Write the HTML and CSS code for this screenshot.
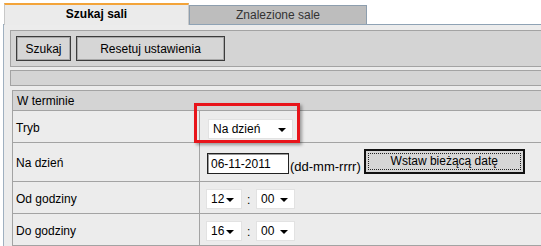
FILE: index.html
```html
<!DOCTYPE html>
<html>
<head>
<meta charset="utf-8">
<link rel="stylesheet" href="styles.css">
</head>
<body>
<div class="page">
  <div class="tabs">
    <div class="tab tab-active">Szukaj sali</div>
    <div class="tab tab-inactive">Znalezione sale</div>
  </div>
  <div class="panel">
    <div class="toolbar">
      <button class="btn btn-szukaj">Szukaj</button>
      <button class="btn btn-reset">Resetuj ustawienia</button>
    </div>
    <div class="strip"></div>
    <div class="form">
      <div class="row row-head"><div class="cell-full">W terminie</div></div>
      <div class="row row-tryb">
        <div class="label">Tryb</div>
        <div class="value">
          <div class="select select-tryb"><span>Na dzień</span><i class="arrow"></i></div>
        </div>
      </div>
      <div class="row row-date">
        <div class="label">Na dzień</div>
        <div class="value value-date">
          <div class="input-date">06-11-2011</div>
          <span class="hint">(dd-mm-rrrr)</span>
          <div class="btn-now"><span class="focus">Wstaw bieżącą datę</span></div>
        </div>
      </div>
      <div class="row row-time">
        <div class="label">Od godziny</div>
        <div class="value value-time">
          <div class="select select-h"><span>12</span><i class="arrow"></i></div>
          <span class="colon">:</span>
          <div class="select select-m"><span>00</span><i class="arrow"></i></div>
        </div>
      </div>
      <div class="row row-time">
        <div class="label">Do godziny</div>
        <div class="value value-time">
          <div class="select select-h"><span>16</span><i class="arrow"></i></div>
          <span class="colon">:</span>
          <div class="select select-m"><span>00</span><i class="arrow"></i></div>
        </div>
      </div>
    </div>
    <div class="highlight"></div>
  </div>
</div>
</body>
</html>
```

FILE: styles.css
```css
html, body {
  margin: 0;
  padding: 0;
  background: #ffffff;
  overflow: hidden;
}
body {
  width: 541px;
  height: 246px;
  font-family: "Liberation Sans", Arial, sans-serif;
  font-size: 12px;
  color: #000;
}
.page {
  width: 541px;
}
.tabs {
  display: flex;
  align-items: flex-end;
  padding-left: 4px;
  height: 24px;
  box-sizing: border-box;
  padding-top: 3px;
}
.tab {
  box-sizing: border-box;
  display: flex;
  align-items: center;
  justify-content: center;
}
.tab-active {
  width: 185px;
  background: #ebebeb;
  border-top: 2px solid #f3a43a;
  border-left: 1px solid #c8c8c8;
  border-right: 1px solid #c8c8c8;
  font-weight: bold;
  padding-bottom: 3px;
  position: relative;
  z-index: 1;
  margin-bottom: -1px;
  height: 22px;
}
.tab-inactive {
  width: 178px;
  height: 19px;
  background: #bdbdbd;
  border: 1px solid #8d9eae;
  border-bottom: none;
  color: #333;
  padding-bottom: 1px;
}
.panel {
  position: relative;
  margin-left: 3px;
  border-left: 1px solid #9fb0c0;
  border-top: 1px solid #8fa3b5;
  background: #ececec;
  height: 222px;
  padding: 5px 0 0 6px;
  box-sizing: border-box;
}
.toolbar {
  display: flex;
  gap: 5px;
  height: 37px;
  box-sizing: border-box;
  background: #d4d4d4;
  border: 1px solid #a3a3a3;
  border-right: none;
  padding: 5px 0 0 5px;
}
.btn {
  font-family: inherit;
  font-size: 12px;
  height: 25px;
  background: #d6d6d6;
  border: 1px solid #3c3c3c;
  box-shadow: inset 0 0 0 1px #a8a8a8;
  padding: 0;
  color: #000;
}
.btn-szukaj { width: 55px; }
.btn-reset { width: 149px; }
.strip {
  margin-top: 3px;
  height: 16px;
  box-sizing: border-box;
  background: #d4d4d4;
  border: 1px solid #a3a3a3;
  border-right: none;
}
.form {
  margin-top: 4px;
  margin-left: 2px;
  border-left: 1px solid #a3a3a3;
  border-top: 1px solid #a3a3a3;
}
.row {
  display: grid;
  grid-template-columns: 187px 1fr;
  border-bottom: 1px solid #a3a3a3;
  box-sizing: border-box;
}
.row-head {
  display: flex;
  height: 20px;
  background: #d4d4d4;
  align-items: center;
  padding-left: 4px;
}
.row-tryb { height: 32px; }
.row-date { height: 39px; }
.row-time { height: 32px; }
.label {
  display: flex;
  align-items: center;
  padding-left: 3px;
  border-right: 1px solid #a3a3a3;
  padding-top: 2px;
}
.value {
  display: flex;
  align-items: center;
  padding-left: 5px;
}
.value-time {
  padding-left: 6px;
}
.select {
  position: relative;
  height: 20px;
  box-sizing: border-box;
  background: #fff;
  border: 1px solid #e2e2e2;
  display: flex;
  align-items: center;
  padding-left: 4px;
}
.select-tryb {
  width: 85px;
  margin-left: 3px;
  margin-top: 4px;
}
.select-h { width: 36px; margin-top: 2px; }
.select-m { width: 39px; margin-top: 2px; }
.arrow {
  position: absolute;
  right: 6px;
  top: 8px;
  width: 0;
  height: 0;
  border-left: 4px solid transparent;
  border-right: 4px solid transparent;
  border-top: 4px solid #000;
}
.select-h .arrow { right: 7px; }
.select-m .arrow { right: 6px; }
.colon {
  width: 14px;
  padding-left: 5px;
  box-sizing: border-box;
  align-self: flex-end;
  padding-bottom: 6px;
}
.value-date {
  padding-left: 7px;
  align-items: flex-end;
  padding-bottom: 7px;
}
.input-date {
  width: 82px;
  height: 21px;
  box-sizing: border-box;
  background: #fff;
  border: 1px solid #222;
  box-shadow: inset 1px 1px 0 #9a9a9a;
  padding-left: 3px;
  display: flex;
  align-items: center;
  padding-top: 1px;
}
.hint {
  margin-left: 1px;
  font-size: 13px;
  line-height: 14px;
}
.btn-now {
  margin-left: 3px;
  width: 161px;
  height: 25px;
  box-sizing: border-box;
  border: 2px solid #111;
  background: #d6d6d6;
  padding: 2px;
  display: flex;
}
.focus {
  flex: 1;
  border: 1px dotted #222;
  display: flex;
  align-items: center;
  justify-content: center;
  padding-bottom: 2px;
}
.highlight {
  position: absolute;
  left: 190px;
  top: 78px;
  width: 106px;
  height: 40px;
  box-sizing: border-box;
  border: 3px solid #e8141a;
  box-shadow: 2px 2px 3px rgba(0,0,0,0.35);
}
```
